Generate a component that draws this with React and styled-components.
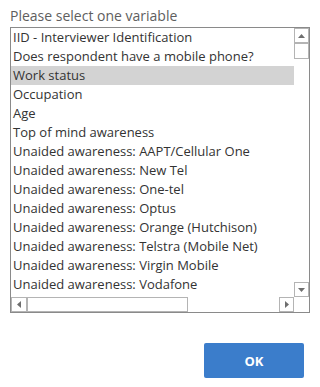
import React, { useState } from 'react';
import styled, { createGlobalStyle } from 'styled-components';

const GlobalStyle = createGlobalStyle`
  html, body {
    margin: 0;
    background: #ffffff;
  }
  body {
    font-family: "Open Sans", "Liberation Sans", sans-serif;
  }
`;

const Page = styled.div`
  width: 318px;
  height: 387px;
  box-sizing: border-box;
  padding: 6px 9px 0 10px;
  display: flex;
  flex-direction: column;
`;

const Title = styled.div`
  font-size: 14px;
  line-height: 19px;
  color: #5e5e5e;
  margin-bottom: 2px;
`;

const ListBox = styled.div`
  width: 300px;
  height: 286px;
  box-sizing: border-box;
  border: 1px solid #8a8a8a;
  display: grid;
  grid-template-columns: 1fr 15px;
  grid-template-rows: 1fr 15px;
  background: #ffffff;
`;

const Items = styled.div`
  overflow: hidden;
`;

const Item = styled.div`
  height: 19px;
  line-height: 19px;
  padding-left: 2px;
  font-size: 13px;
  color: #333333;
  white-space: nowrap;
  background: ${({ $selected }) => ($selected ? '#d3d3d3' : 'transparent')};
  cursor: default;
`;

const VTrack = styled.div`
  display: flex;
  flex-direction: column;
  justify-content: space-between;
`;

const HTrack = styled.div`
  display: flex;
  align-items: stretch;
`;

const Arrow = styled.div`
  box-sizing: border-box;
  width: ${({ $w }) => $w || '15px'};
  height: 15px;
  border: 1px solid #b4b4b4;
  display: flex;
  align-items: center;
  justify-content: center;
  flex: none;
`;

const Thumb = styled.div`
  box-sizing: border-box;
  border: 1px solid #b4b4b4;
  flex: none;
  width: ${({ $w }) => $w};
  height: ${({ $h }) => $h};
`;

const Spacer = styled.div`
  flex: 1;
`;

const Corner = styled.div``;

const Footer = styled.div`
  display: flex;
  justify-content: flex-end;
  padding-right: 5px;
  margin-top: 30px;
`;

const OkButton = styled.button`
  width: 100px;
  height: 35px;
  border: none;
  border-radius: 2px;
  background: #3b7dcb;
  color: #ffffff;
  font-family: "Open Sans", "Liberation Sans", sans-serif;
  font-weight: 700;
  font-size: 13px;
  cursor: pointer;
`;

const Tri = ({ dir }) => {
  const pts = {
    up: '0,4 3.5,0 7,4',
    down: '0,0 7,0 3.5,4',
    left: '4,0 4,7 0,3.5',
    right: '0,0 0,7 4,3.5',
  }[dir];
  const horiz = dir === 'left' || dir === 'right';
  return (
    <svg width={horiz ? 4 : 7} height={horiz ? 7 : 4} viewBox={horiz ? '0 0 4 7' : '0 0 7 4'}>
      <polygon points={pts} fill="#6e6e6e" />
    </svg>
  );
};

const variables = [
  'IID - Interviewer Identification',
  'Does respondent have a mobile phone?',
  'Work status',
  'Occupation',
  'Age',
  'Top of mind awareness',
  'Unaided awareness: AAPT/Cellular One',
  'Unaided awareness: New Tel',
  'Unaided awareness: One-tel',
  'Unaided awareness: Optus',
  'Unaided awareness: Orange (Hutchison)',
  'Unaided awareness: Telstra (Mobile Net)',
  'Unaided awareness: Virgin Mobile',
  'Unaided awareness: Vodafone',
];

export default function App() {
  const [selected, setSelected] = useState(2);

  return (
    <Page>
      <GlobalStyle />
      <Title>Please select one variable</Title>
      <ListBox>
        <Items>
          {variables.map((v, i) => (
            <Item key={v} $selected={i === selected} onClick={() => setSelected(i)}>
              {v}
            </Item>
          ))}
        </Items>
        <VTrack>
          <div>
            <Arrow>
              <Tri dir="up" />
            </Arrow>
            <Thumb $w="15px" $h="16px" />
          </div>
          <Arrow>
            <Tri dir="down" />
          </Arrow>
        </VTrack>
        <HTrack>
          <Arrow $w="16px">
            <Tri dir="left" />
          </Arrow>
          <Thumb $w="161px" $h="15px" />
          <Spacer />
          <Arrow>
            <Tri dir="right" />
          </Arrow>
        </HTrack>
        <Corner />
      </ListBox>
      <Footer>
        <OkButton>OK</OkButton>
      </Footer>
    </Page>
  );
}
